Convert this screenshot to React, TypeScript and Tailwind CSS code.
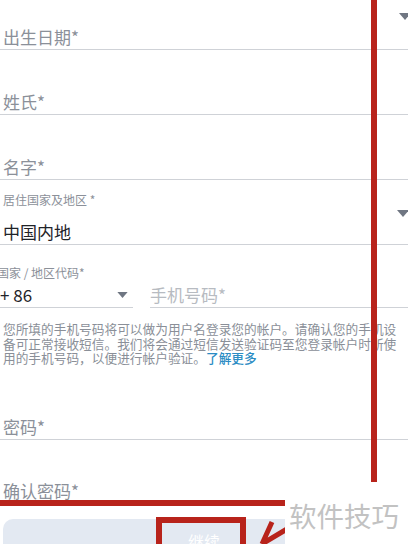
import React from 'react';

const RED = 'bg-[#b8231b]';

function Caret({ className }: { className: string }) {
  return (
    <svg viewBox="0 0 12 7" className={className}>
      <path d="M0 0h12L6 7z" fill="#6f7682" />
    </svg>
  );
}

function Field({ label, height }: { label: string; height: string }) {
  return (
    <div className={`${height} flex items-end border-b border-[#cfd2d7]`}>
      <span className="pl-[3px] text-[17px] leading-[24px] text-[#8b9099]">{label}</span>
    </div>
  );
}

export default function App() {
  return (
    <div className="relative w-[408px] h-[544px] overflow-hidden bg-white font-['Noto_Sans_CJK_SC','Noto_Sans',sans-serif]">
      <div className="flex flex-col">
        <div className="relative">
          <Field label="出生日期*" height="h-[50px]" />
          <Caret className="absolute left-[399px] top-[13px] w-[12px] h-[7px]" />
        </div>
        <Field label="姓氏*" height="h-[65px]" />
        <Field label="名字*" height="h-[65px]" />

        {/* country / region */}
        <div className="relative h-[65px] flex flex-col justify-end border-b border-[#cfd2d7]">
          <span className="pl-[3px] text-[12px] leading-[16px] text-[#8b9099]">居住国家及地区 *</span>
          <span className="pl-[3px] mt-[12px] text-[17px] leading-[24px] text-[#1f2329]">中国内地</span>
          <Caret className="absolute left-[397px] top-[30px] w-[12px] h-[7px]" />
        </div>

        {/* phone */}
        <div className="h-[63px] flex items-end gap-[17px]">
          <div className="w-[133px] flex flex-col border-b border-[#cfd2d7]">
            <span className="ml-[-3px] text-[12px] leading-[16px] text-[#8b9099] whitespace-nowrap">国家 / 地区代码*</span>
            <div className="mt-[2px] flex items-center justify-between pr-[5px]">
              <span className="text-[17px] leading-[24px] text-[#1f2329]">+ 86</span>
              <Caret className="w-[11px] h-[6px]" />
            </div>
          </div>
          <div className="flex-1 border-b border-[#cfd2d7]">
            <span className="text-[17px] leading-[24px] text-[#b7bbc1]">手机号码*</span>
          </div>
        </div>

        <p className="mt-[14px] pl-[3px] text-[12.7px] leading-[14.5px] text-[#8a8f98] whitespace-nowrap">
          您所填的手机号码将可以做为用户名登录您的帐户。请确认您的手机设
          <br />
          备可正常接收短信。我们将会通过短信发送验证码至您登录帐户时所使
          <br />
          用的手机号码，以便进行帐户验证。<span className="font-medium text-[#2b8cc4]">了解更多</span>
        </p>

        <Field label="密码*" height="h-[74.5px]" />
        <Field label="确认密码*" height="h-[64px]" />

        <div className="mt-[15px] mx-[3px] h-[44px] rounded-[10px] bg-[#e3e9f2] flex items-center justify-center">
          <span className="text-[16px] text-white">继续</span>
        </div>
      </div>

      {/* annotations */}
      <div className={`absolute left-[371px] top-0 w-[6px] h-[482px] ${RED}`} />
      <div className={`absolute left-0 top-[500px] w-[285px] h-[6px] ${RED}`} />
      <div className="absolute left-[156px] top-[517px] w-[90px] h-[40px] border-[6px] border-[#b8231b]" />
      <svg className="absolute left-[250px] top-[515px] w-[40px] h-[29px]" viewBox="0 0 40 29">
        <path d="M12 29 L22 7 M12 29 L37 14" stroke="#b8231b" strokeWidth="5" fill="none" />
      </svg>
      <div className="absolute left-[285px] top-[497px] right-0 bottom-0 bg-white">
        <span className="block pl-[4px] text-[27.5px] leading-[36px] text-[#c2c2c2]">软件技巧</span>
      </div>
    </div>
  );
}
